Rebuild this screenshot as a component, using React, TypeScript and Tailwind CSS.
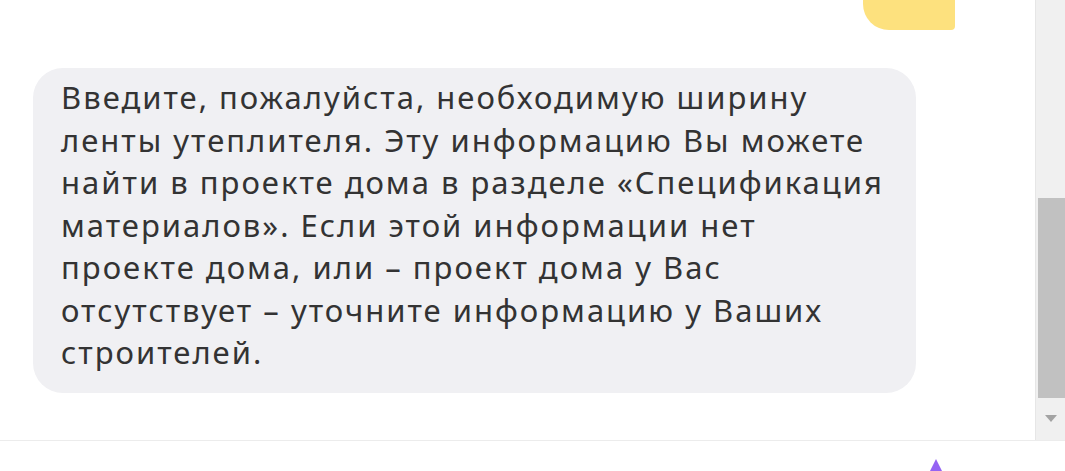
import React from "react";

export default function App() {
  const lines = [
    "Введите, пожалуйста, необходимую ширину",
    "ленты утеплителя. Эту информацию Вы можете",
    "найти в проекте дома в разделе «Спецификация",
    "материалов». Если этой информации нет",
    "проекте дома, или – проект дома у Вас",
    "отсутствует – уточните информацию у Ваших",
    "строителей.",
  ];
  return (
    <div className="w-[1065px] h-[471px] bg-white overflow-hidden flex flex-col" style={{ fontFamily: '"Noto Sans", "Open Sans", sans-serif' }}>
      <div className="flex flex-1 min-h-0">
        <div className="flex-1 flex flex-col relative">
          <div className="flex justify-end pr-[80px]">
            <div className="w-[92px] h-[30px] bg-[#fde17e] rounded-bl-[26px] rounded-br-[4px] relative overflow-hidden">
              <span className="absolute left-[28px] top-[-26px] text-[30px] font-bold text-[#111] leading-[30px]">15</span>
            </div>
          </div>
          <div className="pl-[33px] pt-[38px]">
            <div className="w-[883px] h-[325px] bg-[#f0f0f3] rounded-[30px] pl-[28px] pt-[8px] text-[#333333] text-[31px] leading-[42.5px] tracking-[2px]">
              {lines.map((l, i) => (
                <div key={i} className="whitespace-nowrap">{l}</div>
              ))}
            </div>
          </div>
        </div>
        <div className="w-[30px] bg-[#f0f0f0] border-l border-[#e6e6e6] flex flex-col">
          <div className="h-[198px]" />
          <div className="h-[200px] bg-[#c1c1c1] ml-[2px]" />
          <div className="flex-1 flex items-center justify-center">
            <svg width="12" height="8" viewBox="0 0 12 8"><path d="M0 0 L12 0 L6 7 Z" fill="#a3a3a3" /></svg>
          </div>
        </div>
      </div>
      <div className="h-[31px] border-t border-[#ececec] bg-white relative">
        <svg className="absolute left-[930px] top-[18px]" width="12" height="14" viewBox="0 0 12 14"><path d="M6 0 L12 12 L0 12 Z" fill="#7a3cf0" opacity="0.8" /></svg>
      </div>
    </div>
  );
}
